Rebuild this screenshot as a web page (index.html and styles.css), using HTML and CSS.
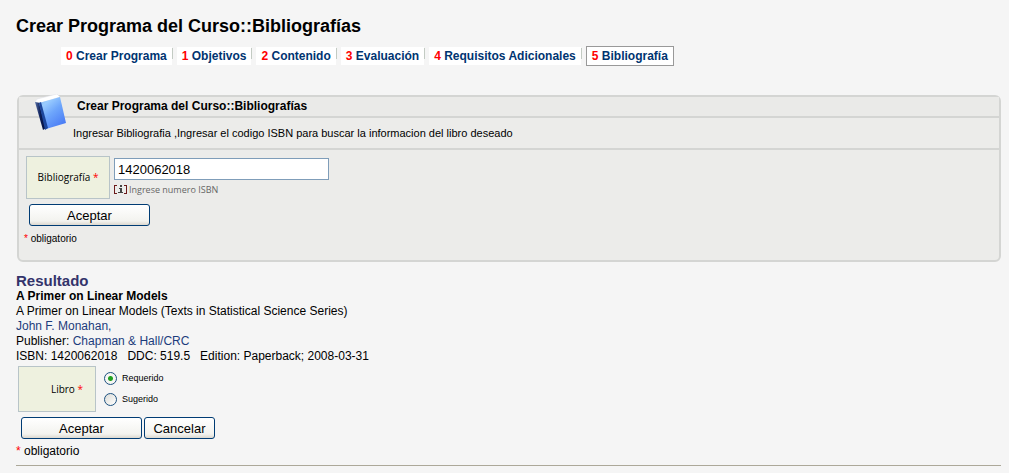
FILE: index.html
```html
<!DOCTYPE html>
<html lang="es">
<head>
    <meta charset="UTF-8">
    <meta name="viewport" content="width=device-width, initial-scale=1.0">
    <title>Crear Programa del Curso::Bibliografías</title>
    <link rel="stylesheet" href="styles.css">
</head>
<body>

<h1>Crear Programa del Curso::Bibliografías</h1>

<nav class="steps">
    <a href="#"><span>0</span> Crear Programa</a>
    <a href="#"><span>1</span> Objetivos</a>
    <a href="#"><span>2</span> Contenido</a>
    <a href="#"><span>3</span> Evaluación</a>
    <a href="#"><span>4</span> Requisitos Adicionales</a>
    <a href="#" class="active"><span>5</span> Bibliografía</a>
</nav>

<form class="panel">
    <div class="panel-head">
        <svg class="book" viewBox="0 0 34 38" width="34" height="38">
            <defs>
                <linearGradient id="cover" x1="0" y1="0" x2="0.7" y2="1">
                    <stop offset="0" stop-color="#7fb6f2"/>
                    <stop offset="0.25" stop-color="#9accff"/>
                    <stop offset="0.55" stop-color="#6ea6fb"/>
                    <stop offset="1" stop-color="#4a7cf5"/>
                </linearGradient>
                <linearGradient id="spine" x1="0" y1="0" x2="1" y2="0">
                    <stop offset="0" stop-color="#5872a8"/>
                    <stop offset="0.5" stop-color="#0b1c55"/>
                    <stop offset="1" stop-color="#050f3a"/>
                </linearGradient>
            </defs>
            <path d="M1 8 L3 5 L23 0 L26 3 L7 9 Z" fill="#fff" stroke="#dcdfe6" stroke-width="0.5"/>
            <path d="M1 8 L6 9 L12 34 L9 36 Z" fill="url(#spine)"/>
            <path d="M5 9 L26 3 L32 29 L12 35 Z" fill="url(#cover)"/>
            <path d="M5 9 L7 8 L14 34 L11 36 Z" fill="#1d469c"/>
        </svg>
        <h2>Crear Programa del Curso::Bibliografías</h2>
    </div>
    <p class="intro">Ingresar Bibliografia ,Ingresar el codigo ISBN para buscar la informacion del libro deseado</p>
    <div class="panel-body">
        <div class="row">
            <label class="caption" for="isbn">Bibliografía&nbsp;<b>*</b></label>
            <div class="field">
                <input type="text" id="isbn" name="isbn" value="1420062018">
                <p class="hint">
                    <svg viewBox="0 0 13 11" width="13" height="11" shape-rendering="crispEdges">
                        <path d="M0 1 H3 V2 H1 V9 H3 V10 H0 Z M13 1 H10 V2 H12 V9 H10 V10 H13 Z" fill="#6b1a1a"/>
                        <path d="M6 1 H8 V3 H6 Z M5 4 H8 V8 H9 V9 H4 V8 H6 V5 H5 Z" fill="#444"/>
                    </svg>
                    Ingrese numero ISBN
                </p>
            </div>
        </div>
        <button type="submit" class="accept">Aceptar</button>
        <p class="required"><b>*</b> obligatorio</p>
    </div>
</form>

<section class="result">
    <h3>Resultado</h3>
    <p><strong>A Primer on Linear Models</strong></p>
    <p>A Primer on Linear Models (Texts in Statistical Science Series)</p>
    <p><a href="#">John F. Monahan,</a></p>
    <p>Publisher: <a href="#">Chapman &amp; Hall/CRC</a></p>
    <p>ISBN: 1420062018 &nbsp; DDC: 519.5 &nbsp; Edition: Paperback; 2008-03-31</p>
</section>

<form class="book-form">
    <div class="row">
        <div class="caption" id="libro">Libro&nbsp;<b>*</b></div>
        <div class="options" role="radiogroup" aria-labelledby="libro">
            <label><input type="radio" name="tipo" value="requerido" checked> Requerido</label>
            <label><input type="radio" name="tipo" value="sugerido"> Sugerido</label>
        </div>
    </div>
    <div class="buttons">
        <button type="submit" class="accept">Aceptar</button>
        <button type="button" class="cancel">Cancelar</button>
    </div>
    <p class="required"><b>*</b> obligatorio</p>
</form>

<hr>

</body>
</html>
```
FILE: styles.css
```css
body {
    font-family: "Liberation Sans", Arial, sans-serif;
    font-size: 12px;
    line-height: 15px;
    color: #000;
    background-color: #f5f5f5;
    margin: 0;
    padding: 16px 8px 0 16px;
}

h1, h2, h3, p {
    margin: 0;
}

h1 {
    font-size: 18px;
    line-height: 20px;
}

a {
    color: #1c3c7c;
    text-decoration: none;
}

.steps {
    display: flex;
    align-items: center;
    gap: 5px;
    height: 20px;
    margin: 10px 0 29px 45px;
}

.steps a {
    position: relative;
    padding: 1px 5px;
    line-height: 16px;
    font-weight: bold;
    color: #003471;
    background-color: #fff;
    white-space: nowrap;
}

.steps span {
    color: #f00;
}

/* divider between steps */
.steps a:not(.active)::after {
    content: "";
    position: absolute;
    top: 1px;
    right: -1px;
    width: 1px;
    height: 11px;
    background-color: #c3cbc3;
}

.steps .active {
    border: 1px solid #999;
}

.panel {
    margin-left: 1px;
    border: 2px solid #d4d5d3;
    border-radius: 6px;
    background-color: #ececea;
}

.panel-head {
    display: flex;
    height: 19px;
    padding-left: 15px;
    border-bottom: 2px solid #d4d5d3;
    background-color: #eaeae8;
}

.book {
    flex: none;
    margin-top: -3px;
}

h2 {
    margin-left: 9px;
    font-size: 12px;
    line-height: 18px;
}

.intro {
    padding: 8px 0 7px 54px;
    font-size: 11px;
    border-bottom: 2px solid #d4d5d3;
}

.panel-body {
    padding: 6px 7px 14px;
}

.row {
    display: flex;
}

.caption {
    display: flex;
    align-items: center;
    box-sizing: border-box;
    border: 1px solid #b8c4c8;
    background-color: #eef1df;
    font-family: "Open Sans", Tahoma, sans-serif;
    font-size: 10px;
}

.panel .caption {
    justify-content: center;
    width: 84px;
    height: 43px;
}

b {
    color: #f00;
    font-weight: normal;
}

.field {
    padding: 2px 0 0 4px;
}

.field input {
    display: block;
    box-sizing: border-box;
    width: 215px;
    height: 22px;
    padding: 0 3px;
    border: 1px solid #7f9db9;
    background-color: #fff;
    font-family: inherit;
    font-size: 13px;
}

.hint {
    display: flex;
    align-items: center;
    gap: 2px;
    height: 18px;
    color: #666;
    font-family: "Open Sans", Tahoma, sans-serif;
    font-size: 9px;
}

button {
    height: 22px;
    padding: 0;
    border: 1px solid #003c74;
    border-radius: 3px;
    background: linear-gradient(#fff, #f3f3ef 80%, #dcd8cf);
    font-family: inherit;
    font-size: 13px;
    color: #000;
}

.accept {
    width: 121px;
}

.cancel {
    width: 71px;
}

.panel .accept {
    display: block;
    margin: 5px 0 5px 3px;
}

.panel .required {
    margin-left: -2px;
    font-size: 10px;
}

.result {
    margin-top: 11px;
}

h3 {
    font-size: 15px;
    line-height: 16px;
    color: #33336b;
}

.book-form .row {
    margin: 2px 0 5px 2px;
}

.book-form .caption {
    justify-content: flex-end;
    width: 78px;
    height: 46px;
    padding-right: 12px;
}

.options {
    display: flex;
    flex-direction: column;
    gap: 8px;
    padding: 6px 0 0 8px;
}

.options label {
    display: flex;
    align-items: center;
    gap: 5px;
    font-size: 9px;
    line-height: 13px;
}

.options input {
    appearance: none;
    box-sizing: border-box;
    width: 13px;
    height: 13px;
    margin: 0;
    border: 1px solid #1c5180;
    border-radius: 50%;
    background: linear-gradient(135deg, #dcdcd7, #fff);
}

.options input:checked {
    background: radial-gradient(circle, #21a121 2px, #f6f6f3 3px);
}

.buttons {
    display: flex;
    gap: 2px;
    margin: 0 0 5px 5px;
}

hr {
    margin: 6px 0 0;
    border: 0;
    border-top: 1px solid #aca899;
}
```
